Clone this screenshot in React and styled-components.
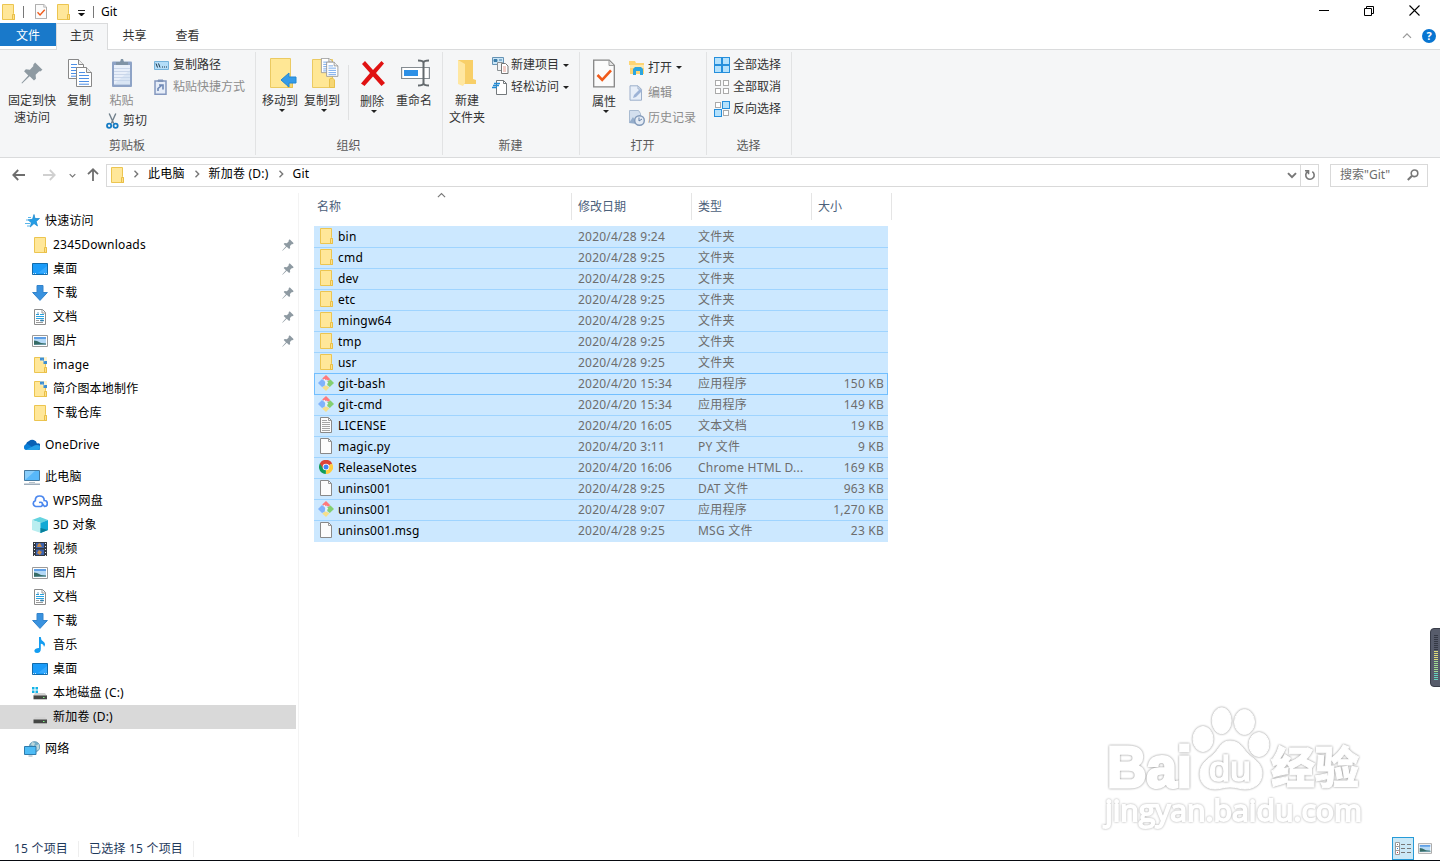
import React from "react";
import styled, { createGlobalStyle, css } from "styled-components";

const FONT = '"Noto Sans", "Noto Sans CJK SC", sans-serif';

const GlobalStyle = createGlobalStyle`
  * {
    box-sizing: border-box;
  }

  body {
    margin: 0;
    overflow: hidden;
    font-family: ${FONT};
    font-size: 12px;
    line-height: 16px;
    color: #000;
    background-color: #fff;
  }

  svg {
    display: block;
    flex-shrink: 0;
  }
`;

/* ---------- icons ---------- */

const FolderIcon = ({ marked }) => (
  <svg width="13" height="16" viewBox="0 0 13 16">
    <path d="M.5.5h11v9.200l1 1v4.800H.5z" fill="#ffe799" stroke="#ecc550" />
    <path d="M10.500 15.500v-5h2v5z" fill="#ffe08a" stroke="#e9bf46" />
    {marked && (
      <g>
        <path d="M6 0h7v8l-3-3-4-1z" fill="#fff3cf" />
        <path d="M6 .5h4v3H6zM9.500 4H13v3H9.500z" fill="#3e8fd2" />
        <path d="M8.500 2.500l2 2" stroke="#76b2e0" />
      </g>
    )}
  </svg>
);

const PinIcon = ({ size = 12 }) => (
  <svg width={size} height={size} viewBox="0 0 20 20">
    <path
      d="M12.8.5L19.5 7l-2 1.6-.9-.2-3.3 3.2.3 3.6-1.8 1.6-3.9-3.9L1 19.5.4 19l6.2-6.8-3.8-3.8 1.6-1.7 3.7.3 3.2-3.3-.3-1z"
      fill="#8e9aa2"
    />
  </svg>
);

const CheckDocIcon = ({ width = 12, height = 15 }) => (
  <svg width={width} height={height} viewBox="0 0 22 28">
    <path d="M.7.7h15.5l5.1 5.1v21.5H.7z" fill="#fbfbfb" stroke="#858585" strokeWidth="1.3" />
    <path d="M16 1v5h5" fill="#e5e5e5" stroke="#999" />
    <path d="M4.5 15.5l4.7 4.8 8.8-9.5" fill="none" stroke="#f05a1a" strokeWidth="2.6" />
  </svg>
);

const Page = ({ x, y, color = "#4d8fe5" }) => (
  <g transform={`translate(${x} ${y})`}>
    <path d="M.5.5h10l5 5v14H.5z" fill="#fff" stroke="#888" />
    <path d="M10.5.5v5h5" fill="#eee" stroke="#888" />
    <path d="M3 5.5h6M3 8.5h10M3 11.5h10M3 14.5h10M3 17.2h10" stroke={color} />
  </g>
);

const CopyIcon = () => (
  <svg width="26" height="30" viewBox="0 0 26 30">
    <Page x={1} y={1} />
    <Page x={9} y={9} />
  </svg>
);

const PasteIcon = () => (
  <svg width="22" height="30" viewBox="0 0 22 30">
    <rect x="1" y="3.5" width="20" height="25.5" rx="1" fill="#8ea3c6" />
    <path d="M3 7h16v19.5H3z" fill="#e9f0fa" />
    <path d="M3 10.5h16M3 13.5h16M3 16.5h16M3 19.5h16M3 22.5h16" stroke="#cbd7ea" />
    <path d="M5 7V4h4l1-3h2l1 3h4v3z" fill="#8094a6" />
    <path d="M3 26.5L19 12v14.5z" fill="#c6d6ed" opacity=".45" />
  </svg>
);

const CutIcon = () => (
  <svg width="13" height="16" viewBox="0 0 13 16">
    <path d="M3.200.500l4.500 10M9.800.500l-4.500 10" stroke="#71808c" strokeWidth="1.400" />
    <circle cx="3.100" cy="12.700" r="2.100" fill="none" stroke="#147bc4" strokeWidth="1.800" />
    <circle cx="9.600" cy="12.700" r="2.100" fill="none" stroke="#147bc4" strokeWidth="1.800" />
  </svg>
);

const PathIcon = () => (
  <svg width="15" height="9" viewBox="0 0 15 9">
    <path d="M.5.5h14v8H.5z" fill="#b4ddf8" stroke="#76b3db" />
    <path d="M2 2.500l1.500 4M4.500 2.500l1.500 4M8 6h1M10 6h1M12 6h1" stroke="#1c3548" fill="none" />
  </svg>
);

const ShortcutIcon = () => (
  <svg width="13" height="16" viewBox="0 0 13 16">
    <path d="M1 2h11v13.200H1z" fill="#e6edf8" stroke="#8498bf" strokeWidth="1.5" />
    <path d="M4 2.500V1h5v1.500H4z" fill="#8095b9" stroke="#8095b9" />
    <path d="M4 12V9.500l3.500-3M5 6h4v4.500" fill="none" stroke="#6d87b5" strokeWidth="1.600" />
  </svg>
);

const MoveToIcon = () => (
  <svg width="28" height="31" viewBox="0 0 28 31">
    <path d="M1.5.5h20v23l2 2v4H1.5z" fill="#ffe795" stroke="#ebca62" />
    <path d="M18.5 29.5V21l2-1 3 2v7.5z" fill="#f6d673" stroke="#e8c14c" />
    <path d="M12 22l8-7v4h7v6h-7v4z" fill="#359be8" stroke="#2287d4" />
  </svg>
);

const CopyToIcon = () => (
  <svg width="28" height="31" viewBox="0 0 28 31">
    <path d="M1.500 1.500h20v22l2 2v4h-22z" fill="#ffe795" stroke="#ebca62" />
    <path d="M18.500 29.500V21l3-1 2 2v7.500z" fill="#f6d673" stroke="#e8c14c" />
    <g transform="translate(10) scale(.75)">
      <Page x={0} y={0} />
      <Page x={7} y={5} />
    </g>
  </svg>
);

const DeleteIcon = () => (
  <svg width="26" height="27" viewBox="0 0 26 27">
    <path d="M2 4l3-3 8 9 8.5-9L24 3.5l-8 9.5 9 10-3.5 3-8.5-9.5L4.5 26 1 23.5 10 13z" fill="#e01212" />
  </svg>
);

const RenameIcon = () => (
  <svg width="29" height="28" viewBox="0 0 29 28">
    <path d="M.6 8.5h27.8v11H.6z" fill="#fff" stroke="#858c91" strokeWidth="1.2" />
    <path d="M3 11h14v6H3z" fill="#2d90e6" />
    <path d="M17 1.500q5 0 5.500 2Q23 1.500 28 1.500M22.500 3v22M17 26.500q5 0 5.500-2q.5 2 5.500 2" fill="none" stroke="#63696d" strokeWidth="2" />
  </svg>
);

const NewFolderIcon = () => (
  <svg width="20" height="28" viewBox="0 0 20 28">
    <path d="M1 1h15v19l3 1v4H1z" fill="#f8cf68" />
    <path d="M1 1l7 4v19l-2 3-5-2z" fill="#ffe7a1" />
  </svg>
);

const NewItemIcon = () => (
  <svg width="17" height="17" viewBox="0 0 17 17">
    <path d="M.5.500h11v7H.5z" fill="#cbe6f7" stroke="#6593b5" />
    <path d="M2 2.500h3v2H2zM7 3h3" fill="#3c7ea9" stroke="#3c7ea9" />
    <path d="M5.500 5.500h5v8h-5z" fill="#f2f4f5" stroke="#8b9195" />
    <path d="M9.500 6.500h4l2.500 2.500v7.500H9.500z" fill="#fff" stroke="#777" />
    <path d="M11 10h3M11 12h3M11 14h3" stroke="#e49a8e" />
  </svg>
);

const EasyAccessIcon = () => (
  <svg width="16" height="17" viewBox="0 0 16 17">
    <path d="M4.500 1.500h7l3 3v11h-10z" fill="#fff" stroke="#74797c" />
    <path d="M11.500 1.500v3h3" fill="none" stroke="#74797c" />
    <path d="M2 4.500h6M1 6.500h6M0 8.500h5" stroke="#238bd4" strokeWidth="1.300" />
  </svg>
);

const OpenIcon = () => (
  <svg width="16" height="14" viewBox="0 0 16 14">
    <path d="M0 0h6l1 2h8v11H1V4H0z" fill="#fdd574" />
    <path d="M1 4h14v3H1z" fill="#fee9ac" />
    <path d="M4 14V8l2-2h6l2 2v6h-3v-4H7v4z" fill="#2ba5df" />
  </svg>
);

const EditIcon = () => (
  <svg width="14" height="16" viewBox="0 0 14 16">
    <path d="M1 .800h8l3.500 3.500v10.900H1z" fill="#e7eef8" stroke="#9cafca" />
    <path d="M9 1v3h3" fill="none" stroke="#9cafca" />
    <path d="M4 13l1-3 6-6 2 2-6 6z" fill="#9db3d6" />
  </svg>
);

const HistoryIcon = () => (
  <svg width="16" height="16" viewBox="0 0 16 16">
    <path d="M.5.500h9l2 3v9H.5z" fill="#d3dfee" stroke="#a9bbd1" />
    <path d="M0 13l4-6 4 7z" fill="#94adcb" />
    <circle cx="10.500" cy="10.500" r="4.800" fill="#e4ebf4" stroke="#8199b9" strokeWidth="1.400" />
    <path d="M10 7.500v3.500l3-2" fill="none" stroke="#637fa6" />
  </svg>
);

const GridIcon = ({ active = [] }) => (
  <svg width="16" height="16" viewBox="0 0 16 16">
    {[0, 1, 2, 3].map((i) => {
      const on = active.includes(i);
      const size = on ? 7 : 5;
      const off = on ? 0.5 : 1.5;
      return (
        <rect
          key={i}
          x={(i % 2) * 8 + off}
          y={Math.floor(i / 2) * 8 + off}
          width={size}
          height={size}
          fill={on ? "#b4e1fc" : "#fff"}
          stroke={on ? "#258fdc" : "#aaa"}
        />
      );
    })}
  </svg>
);

const StarIcon = () => (
  <svg width="15" height="14" viewBox="0 0 15 14">
    <path d="M9 .5l1 4h4.500l-3.300 2.900L12.500 12 9 9.500 5.300 13l1-4.300L3 5.800l4.500-.5z" fill="#239de6" stroke="#1684cb" strokeWidth=".7" />
    <path d="M3 3.500h3M1 6h4M0 9.500h5M2 12h3" stroke="#58b5ea" />
  </svg>
);

const DesktopIcon = () => (
  <svg width="16" height="12" viewBox="0 0 16 12">
    <path d="M.5.500h15v11H.5z" fill="#1b9cf9" stroke="#116bab" />
    <path d="M6 10L15 3v7z" fill="#35a9fe" />
    <path d="M1 10.500h1M3 10.500h1M12 10.500h1M14 10.500h1" stroke="#cce8fb" />
  </svg>
);

const DownloadIcon = () => (
  <svg width="16" height="16" viewBox="0 0 16 16">
    <path d="M5 .500h6v7h4.400L8 15.400.600 7.500H5z" fill="#3992df" stroke="#3484cb" />
  </svg>
);

const DocumentIcon = () => (
  <svg width="12" height="16" viewBox="0 0 12 16">
    <path d="M.5.500h8l3 3v12H.5z" fill="#fff" stroke="#8c8c8c" />
    <path d="M8 .500v3.500h3.500" fill="none" stroke="#999" />
    <path d="M2 5.500h3M6 5.500h4M2 7.500h8M2 9.500h8" stroke="#28a2df" />
    <path d="M2 11.500h3M2 13.500h7" stroke="#999" />
    <path d="M4 3v3M6.500 11h3v1h-3z" stroke="#317fae" fill="#317fae" strokeWidth=".7" />
  </svg>
);

const PictureIcon = ({ width = 16, height = 12 }) => (
  <svg width={width} height={height} viewBox="0 0 16 12">
    <path d="M.5.500h15v11H.5z" fill="#fff" stroke="#9a9a9a" />
    <path d="M2 2h12v8H2z" fill="#b5d9f6" />
    <path d="M2 2h12v2H2z" fill="#5f9fe6" />
    <path d="M2 5.500l3 .5 4 2 5 .5V10H2z" fill="#376c66" />
    <path d="M2 9.500l12-.8V10H2z" fill="#6e9da8" />
  </svg>
);

const OneDriveIcon = () => (
  <svg width="16" height="12" viewBox="0 0 16 12">
    <path d="M2.500 11A3 3 0 0 1 2 5.300 4 4 0 0 1 5 2 4.800 4.800 0 0 1 13 4.500 3.200 3.200 0 0 1 14.500 11z" fill="#0860b5" />
    <path d="M0 8.500Q.4 5.500 3.500 5l9 6H3Q0 11 0 8.500" fill="#087fd8" />
    <path d="M2 10.800l9-4.500q5-1 5 2.200 0 2.500-2.500 2.500H3z" fill="#26a0e8" />
  </svg>
);

const ComputerIcon = () => (
  <svg width="16" height="15" viewBox="0 0 16 15">
    <path d="M.5.500h15v10H.5z" fill="#58b8fa" stroke="#45799f" />
    <path d="M1 10L11 1H1z" fill="#88cdfb" />
    <path d="M5 12.500h6" stroke="#b5c1ca" />
    <path d="M0 14.200h16" stroke="#8699aa" strokeWidth="1.200" />
  </svg>
);

const CloudIcon = () => (
  <svg width="16" height="13" viewBox="0 0 16 13">
    <path d="M9.500 11.500H3.800A3 3 0 0 1 3.300 5.700Q3.200 1 7.700 1T12.200 5.500a3 3 0 0 1 .3 6l-2-2.500M7 7.500q3.500-1 3.500 2 0 1.500-1.500 2" fill="none" stroke="#4b87ee" strokeWidth="1.700" />
  </svg>
);

const CubeIcon = () => (
  <svg width="16" height="16" viewBox="0 0 16 16">
    <path d="M0 3l8-3 8 3-7 3z" fill="#64d3df" />
    <path d="M0 3l9 3v10l-9-3z" fill="#b9eef0" />
    <path d="M8.500 6L16 3v10l-7.500 3z" fill="#12a9d5" />
    <path d="M8.500 11l7.500 2-7.500 3z" fill="#087f9b" />
  </svg>
);

const VideoIcon = () => (
  <svg width="14" height="14" viewBox="0 0 14 14">
    <path d="M0 0h14v14H0z" fill="#343941" />
    <path d="M1.500 1v13M12.500 1v13" stroke="#eee" strokeDasharray="1 2" />
    <path d="M3 1h8v5H3zM3 7.500h8V13H3z" fill="#3b63af" />
    <path d="M5 2l2-1 2 4H4zM4 11l2-3 3 2-2 3z" fill="#c88a48" />
  </svg>
);

const MusicIcon = () => (
  <svg width="12" height="16" viewBox="0 0 12 16">
    <path d="M5 0h1.800q0 3 2.200 4.200 3.500 2.300 1 5.800-.2-3-3.200-3.300V12q0 4-3.800 4-3 0-2.600-2.500Q1 11 5 11z" fill="#139df1" />
  </svg>
);

const DriveIcon = ({ system }) => (
  <svg width="16" height="16" viewBox="0 0 16 16">
    <path d="M3 8h10l2 3H1z" fill="#d3d3d3" />
    <path d="M1.500 10.500h13.500v3.800H1.500z" fill="#454745" />
    <path d="M11 12.500h1.500" stroke="#7ef482" />
    {system && <path d="M0 2h2.500v2.500H0zM3.500 2H6v2.500H3.500zM0 5.500h2.500V8H0zM3.500 5.500H6V8H3.500z" fill="#13b3e7" />}
  </svg>
);

const NetworkIcon = () => (
  <svg width="16" height="16" viewBox="0 0 16 16">
    <circle cx="10.500" cy="5.800" r="5.300" fill="#74aec8" stroke="#528ba8" strokeWidth=".6" />
    <path d="M8 1l3 1-1 3-3-1zM11 5l4-2v5l-3 2z" fill="#bed7db" />
    <path d="M.5 5.500h11.500v8H.5z" fill="#4ebcf5" stroke="#2e7bac" />
    <path d="M4.500 15h4" stroke="#98a8b2" />
  </svg>
);

const GitIcon = () => (
  <svg width="16" height="16" viewBox="0 0 16 16">
    <path d="M8 0l4.300 4.300-2 1.500-2-1.300-1.300 1.200-2.800-2.200z" fill="#ff797b" />
    <path d="M4 4l3.500 3-1 4L4 12 0 8z" fill="#80b2fb" />
    <path d="M12.500 4.500L16 8l-4.200 4-2.500-2V6.500z" fill="#83cf71" />
    <path d="M7.500 10.200l4 2L8 16l-3.800-3.500z" fill="#f6df8a" />
    <path d="M6 4.200l2 2.300v4M8 7l2 1" fill="none" stroke="#eaf5fb" strokeWidth="1.200" />
  </svg>
);

const FileIcon = ({ lines }) => (
  <svg width="12" height="16" viewBox="0 0 12 16">
    <path d="M.5.500h8l3 3v12H.5z" fill="#fcfcfc" stroke="#898989" />
    <path d="M8.500.500v3h3" fill="none" stroke="#999" />
    {lines && <path d="M2 3.500h5M2 5.500h8M2 7.500h8M2 9.500h8M2 11.500h8M2 13.500h8" stroke="#a5a5a5" />}
  </svg>
);

const ChromeIcon = () => (
  <svg width="14" height="14" viewBox="0 0 14 14">
    <path d="M7 7L.9 3.500A7 7 0 0 1 13.100 3.500z" fill="#dc4437" />
    <path d="M7 7l6.100-3.500A7 7 0 0 1 6.800 14z" fill="#ffcd40" />
    <path d="M7 7l-.2 7A7 7 0 0 1 .9 3.500z" fill="#119d58" />
    <path d="M7 3.500h6.100A7 7 0 0 0 .9 3.500L4 8.500z" fill="#dc4437" />
    <circle cx="7" cy="7" r="3.300" fill="#fff" />
    <circle cx="7" cy="7" r="2.500" fill="#4285f4" />
  </svg>
);

const ChevronIcon = ({ dir = "right", color = "#777", size = 8, stroke = 1.4 }) => {
  const turn = { right: 0, down: 90, up: -90 }[dir];
  return (
    <svg width={size} height={size} viewBox="0 0 8 8">
      <path d="M2.500.800L5.700 4 2.500 7.200" fill="none" stroke={color} strokeWidth={stroke} transform={`rotate(${turn} 4 4)`} />
    </svg>
  );
};

const ArrowIcon = ({ turn = 0, color = "#6e6e6e" }) => (
  <svg width="14" height="14" viewBox="0 0 14 14">
    <path d="M13 7H1.500M6.200 2L1.300 7l4.900 5" fill="none" stroke={color} strokeWidth="1.800" transform={`rotate(${turn} 7 7)`} />
  </svg>
);

const RefreshIcon = () => (
  <svg width="12" height="12" viewBox="0 0 12 12">
    <path d="M8.300 2.600a4.200 4.200 0 1 1-4.800.1M1 1.700h3.500v3.500" fill="none" stroke="#777" strokeWidth="1.600" />
  </svg>
);

const SearchIcon = () => (
  <svg width="12" height="12" viewBox="0 0 12 12">
    <circle cx="7.500" cy="4.300" r="3.300" fill="none" stroke="#777" strokeWidth="1.600" />
    <path d="M5 6.800L.800 11" stroke="#777" strokeWidth="2" />
  </svg>
);

const DetailsIcon = () => (
  <svg width="16" height="14" viewBox="0 0 16 14">
    <path d="M.5.500h4v12h-4zM.5 4.500h4M.5 8.500h4" fill="#fff" stroke="#999" />
    <path d="M2 2.500h1" stroke="#777" />
    <path d="M2 6.500h1" stroke="#2a7fd0" />
    <path d="M2 10.500h1" stroke="#c33" />
    <path d="M6 2.500h4M12 2.500h4M6 6.500h4M12 6.500h4M6 10.500h4M12 10.500h4" stroke="#777" />
  </svg>
);

/* ---------- layout ---------- */

const Window = styled.div`
  display: flex;
  flex-direction: column;
  width: 1440px;
  height: 861px;
  border-bottom: 1px solid #080a10;
  background-color: #fff;
`;

const TitleBar = styled.header`
  display: flex;
  justify-content: space-between;
  height: 23px;
`;

const QuickTools = styled.div`
  display: flex;
  align-items: center;
  height: 23px;
  padding-left: 2px;
`;

const ToolDivider = styled.i`
  width: 1px;
  height: 12px;
  margin: 0 ${({ $right }) => $right}px 0 ${({ $left }) => $left}px;
  background-color: #777;
`;

const CustomizeMark = styled.i`
  width: 7px;
  height: 6px;
  margin: 3px 0 0 8px;
  border-top: 1px solid #222;

  &::after {
    content: "";
    display: block;
    margin-top: 2px;
    border: 3.5px solid transparent;
    border-top: 3px solid #111;
    border-bottom: 0;
  }
`;

const CheckButton = styled.span`
  margin-right: 10px;
`;

const WindowButtons = styled.div`
  display: flex;
  align-items: center;
  gap: 35px;
  height: 21px;
  padding-right: 20px;
`;

const Tabs = styled.nav`
  display: flex;
  height: 27px;
  border-bottom: 1px solid #dadbdc;
`;

const Tab = styled.a`
  width: 53px;
  height: 27px;
  line-height: 23px;
  text-align: center;
  color: #333;
  border: 1px solid transparent;
  border-bottom: 0;

  ${({ $file }) =>
    $file &&
    css`
      width: 56px;
      height: 23px;
      line-height: 25px;
      color: #fff;
      border: 0;
      background-color: #1979ca;
    `}

  ${({ $active }) =>
    $active &&
    css`
      width: 52px;
      border-color: #dadbdc;
      background-color: #f5f6f7;
    `}
`;

const TabTools = styled.div`
  display: flex;
  align-items: center;
  gap: 10px;
  margin-left: auto;
  padding-right: 4px;
`;

const Help = styled.span`
  width: 14px;
  height: 14px;
  border-radius: 50%;
  background-color: #0875d1;
  color: #fff;
  font-size: 11px;
  font-weight: bold;
  line-height: 14px;
  text-align: center;
`;

const Ribbon = styled.section`
  display: flex;
  height: 108px;
  border-bottom: 1px solid #dadbdc;
  background-color: #f5f6f7;
`;

const Group = styled.div`
  display: flex;
  flex-direction: column;
  justify-content: space-between;
  width: ${({ $width }) => $width}px;
  height: 103px;
  margin-top: 2px;
  border-right: 1px solid #e2e3e4;
`;

const GroupBody = styled.div`
  display: flex;
  padding: 2px 0 0 ${({ $left = 0 }) => $left}px;
`;

const GroupName = styled.div`
  height: 17px;
  padding-right: 1px;
  color: #5a5a5a;
  text-align: center;
`;

const BigButton = styled.div`
  display: flex;
  flex-direction: column;
  align-items: center;
  width: ${({ $width }) => $width}px;
  line-height: 17px;
  text-align: center;
  color: ${({ $muted }) => ($muted ? "#8c8c8c" : "#333")};
`;

const BigIcon = styled.div`
  display: flex;
  align-items: center;
  justify-content: center;
  height: ${({ $low }) => ($low ? 39 : 38)}px;
  padding-left: ${({ $shift = 0 }) => $shift}px;
`;

const Caret = styled.i`
  border: 3px solid transparent;
  border-top-color: #222;
  border-bottom: 0;
  margin: 0 0 0 4px;
`;

const RibbonDivider = styled.i`
  width: 1px;
  height: 55px;
  margin: 11px 2px 0 5px;
  background-color: #e0e1e2;
`;

const Column = styled.div`
  display: flex;
  flex-direction: column;
  padding: ${({ $top = 0 }) => $top}px 0 0 ${({ $left = 0 }) => $left}px;
`;

const SmallButton = styled.div`
  display: flex;
  align-items: center;
  height: ${({ $height = 22 }) => $height}px;
  white-space: nowrap;
  color: ${({ $muted }) => ($muted ? "#8c8c8c" : "#333")};
`;

const SmallIcon = styled.span`
  display: flex;
  width: ${({ $width = 16 }) => $width}px;
  margin-right: 3px;
`;

const AddressRow = styled.section`
  display: flex;
  align-items: center;
  height: 32px;
  padding: 2px 12px 0;
`;

const NavButtons = styled.div`
  display: flex;
  align-items: center;
  width: 94px;

  & > :nth-child(2) {
    margin-left: 16px;
  }

  & > :nth-child(3) {
    margin-left: 13px;
  }

  & > :nth-child(4) {
    margin-left: 10px;
  }
`;

const AddressBox = styled.div`
  display: flex;
  align-items: center;
  width: 1213px;
  height: 23px;
  padding-left: 4px;
  border: 1px solid #d9d9d9;
`;

const Crumb = styled.span`
  display: flex;
  align-items: center;
  gap: 8px;
  margin-left: 8px;
  padding-bottom: 2px;
`;

const AddressTools = styled.div`
  display: flex;
  align-items: center;
  gap: 3px;
  height: 21px;
  margin-left: auto;
  padding-right: 2px;
`;

const RefreshCell = styled.span`
  display: flex;
  align-items: center;
  height: 21px;
  padding-left: 3px;
  border-left: 1px solid #d9d9d9;
`;

const SearchBox = styled.div`
  display: flex;
  align-items: center;
  justify-content: space-between;
  width: 98px;
  height: 23px;
  margin-left: 11px;
  padding: 0 8px 0 9px;
  border: 1px solid #d9d9d9;
  color: #6d6d6d;
`;

const Content = styled.main`
  display: flex;
  height: 647px;
`;

const Sidebar = styled.aside`
  width: 299px;
  height: 644px;
  margin-top: 3px;
  padding-top: 16px;
  border-right: 1px solid #f3f3f3;
`;

const SideItem = styled.div`
  display: flex;
  align-items: center;
  width: 296px;
  height: 24px;
  margin-top: ${({ $spaced }) => ($spaced ? 8 : 0)}px;
  padding: 0 2px 0 ${({ $root }) => ($root ? 24 : 32)}px;
  background-color: ${({ $selected }) => ($selected ? "#d9d9d9" : "transparent")};

  & > svg:last-child {
    margin-left: auto;
  }
`;

const SideIcon = styled.span`
  display: flex;
  justify-content: center;
  width: 16px;
  margin-right: 5px;
`;

const Label = styled.span`
  white-space: nowrap;
  letter-spacing: 0.2px;
`;

const Files = styled.section`
  width: 593px;
  padding: 3px 0 0 15px;
`;

const columns = css`
  display: grid;
  grid-template-columns: 258px 120px 120px 80px;
`;

const FileHeader = styled.div`
  ${columns}
  height: 27px;
  margin-bottom: 6px;
  color: #4c607a;
`;

const HeaderCell = styled.div`
  position: relative;
  padding-left: ${({ $first }) => ($first ? 3 : 6)}px;
  line-height: 27px;
  border-right: 1px solid #e5e5e5;
`;

const SortMark = styled.span`
  position: absolute;
  top: -2px;
  left: 123px;
`;

const FileRow = styled.div`
  ${columns}
  grid-template-columns: 258px 120px 120px 76px;
  align-items: center;
  width: 574px;
  height: 21px;
  background-color: #cce8ff;
  border-top: 1px solid #9fd4ff;
  color: #6d6d6d;
  box-shadow: ${({ $focused }) => ($focused ? "inset 1px 0 #72bfff, inset -1px 0 #72bfff" : "none")};
  border-top-color: ${({ $focused, $afterFocus }) => ($focused || $afterFocus ? "#72bfff" : "#9fd4ff")};

  &:first-child {
    border-top-color: #cce8ff;
  }

  &:last-child {
    height: 22px;
    padding-bottom: 1px;
  }
`;

const FileName = styled.div`
  display: flex;
  align-items: center;
  height: 16px;
  padding-left: 4px;
  color: #000;
`;

const FileGlyph = styled(SideIcon)`
  margin: -2px 4px 0 0;
`;

const Cell = styled.div`
  padding-left: 6px;
  white-space: nowrap;
  letter-spacing: 0.22px;
`;

const SizeCell = styled(Cell)`
  padding: 0 4px 0 0;
  text-align: right;
`;

const StatusBar = styled.footer`
  display: flex;
  align-items: center;
  height: 23px;
  padding: 0 8px 0 14px;
  color: #1e395b;
`;

const StatusText = styled.span`
  height: 16px;
  padding-right: 10px;
  margin-right: 10px;
  border-right: 1px solid #eee;
  letter-spacing: 0.2px;
`;

const ViewButtons = styled.div`
  display: flex;
  align-items: center;
  gap: 4px;
  margin-left: auto;
`;

const ViewActive = styled.span`
  display: flex;
  align-items: center;
  justify-content: center;
  width: 22px;
  height: 23px;
  border: 1px solid #269bd8;
  background-color: #cbe8f6;
`;

const Meter = styled.div`
  position: absolute;
  top: 628px;
  left: 1430px;
  display: flex;
  flex-direction: column;
  gap: 1px;
  width: 14px;
  height: 59px;
  padding: 6px 0 0 3px;
  border: 1px solid #393d49;
  border-radius: 4px;
  background-color: #575c6b;
`;

const MeterBar = styled.i`
  width: 4px;
  height: 1px;
  background-color: ${({ $color }) => $color};
`;

const Watermark = styled.svg`
  position: absolute;
  top: 700px;
  left: 1098px;
  fill: #fff;
  stroke: #fff;

  & > * {
    filter: drop-shadow(0 0 0.9px #8c8c8c);
  }

  & > :last-child {
    filter: drop-shadow(0 0 0.9px #a8a8a8);
  }
`;

const quickAccess = [
  { name: "2345Downloads", icon: <FolderIcon />, pinned: true },
  { name: "桌面", icon: <DesktopIcon />, pinned: true },
  { name: "下载", icon: <DownloadIcon />, pinned: true },
  { name: "文档", icon: <DocumentIcon />, pinned: true },
  { name: "图片", icon: <PictureIcon />, pinned: true },
  { name: "image", icon: <FolderIcon marked /> },
  { name: "简介图本地制作", icon: <FolderIcon marked /> },
  { name: "下载仓库", icon: <FolderIcon /> },
];

const computer = [
  { name: "WPS网盘", icon: <CloudIcon /> },
  { name: "3D 对象", icon: <CubeIcon /> },
  { name: "视频", icon: <VideoIcon /> },
  { name: "图片", icon: <PictureIcon /> },
  { name: "文档", icon: <DocumentIcon /> },
  { name: "下载", icon: <DownloadIcon /> },
  { name: "音乐", icon: <MusicIcon /> },
  { name: "桌面", icon: <DesktopIcon /> },
  { name: "本地磁盘 (C:)", icon: <DriveIcon system /> },
  { name: "新加卷 (D:)", icon: <DriveIcon />, selected: true },
];

const sideItems = [
  { name: "快速访问", icon: <StarIcon />, root: true },
  ...quickAccess,
  { name: "OneDrive", icon: <OneDriveIcon />, root: true, spaced: true },
  { name: "此电脑", icon: <ComputerIcon />, root: true, spaced: true },
  ...computer,
  { name: "网络", icon: <NetworkIcon />, root: true, spaced: true },
];

const fileIcons = {
  folder: <FolderIcon />,
  git: <GitIcon />,
  text: <FileIcon lines />,
  file: <FileIcon />,
  chrome: <ChromeIcon />,
};

const files = [
  ["bin", "2020/4/28 9:24", "文件夹", "", "folder"],
  ["cmd", "2020/4/28 9:25", "文件夹", "", "folder"],
  ["dev", "2020/4/28 9:25", "文件夹", "", "folder"],
  ["etc", "2020/4/28 9:25", "文件夹", "", "folder"],
  ["mingw64", "2020/4/28 9:25", "文件夹", "", "folder"],
  ["tmp", "2020/4/28 9:25", "文件夹", "", "folder"],
  ["usr", "2020/4/28 9:25", "文件夹", "", "folder"],
  ["git-bash", "2020/4/20 15:34", "应用程序", "150 KB", "git"],
  ["git-cmd", "2020/4/20 15:34", "应用程序", "149 KB", "git"],
  ["LICENSE", "2020/4/20 16:05", "文本文档", "19 KB", "text"],
  ["magic.py", "2020/4/20 3:11", "PY 文件", "9 KB", "file"],
  ["ReleaseNotes", "2020/4/20 16:06", "Chrome HTML D...", "169 KB", "chrome"],
  ["unins001", "2020/4/28 9:25", "DAT 文件", "963 KB", "file"],
  ["unins001", "2020/4/28 9:07", "应用程序", "1,270 KB", "git"],
  ["unins001.msg", "2020/4/28 9:25", "MSG 文件", "23 KB", "file"],
];

const FOCUSED_ROW = 7;

const meterColor = (i) => {
  if (i < 8) return "#343844";
  if (i < 13) return "#dddc79";
  return i < 19 ? "#a0dc91" : "#65d5bd";
};

const Big = ({ icon, width, muted, caret, shift, low, children }) => (
  <BigButton $width={width} $muted={muted}>
    <BigIcon $shift={shift} $low={low}>{icon}</BigIcon>
    <span>{children}</span>
    {caret && <Caret />}
  </BigButton>
);

const Small = ({ icon, iconWidth, height, muted, caret, children }) => (
  <SmallButton $height={height} $muted={muted}>
    <SmallIcon $width={iconWidth}>{icon}</SmallIcon>
    {children}
    {caret && <Caret />}
  </SmallButton>
);

const RibbonBar = () => (
  <Ribbon>
    <Group $width={256}>
      <GroupBody>
        <Big icon={<PinIcon size={22} />} width={64}>
          固定到快
          <br />
          速访问
        </Big>
        <Big icon={<CopyIcon />} width={30} shift={1}>复制</Big>
        <Column $left={12}>
          <Big icon={<PasteIcon />} width={31} muted>粘贴</Big>
          <Small icon={<CutIcon />} iconWidth={14} height={24}>剪切</Small>
        </Column>
        <Column $left={7}>
          <Small icon={<PathIcon />}>复制路径</Small>
          <Small icon={<ShortcutIcon />} muted>粘贴快捷方式</Small>
        </Column>
      </GroupBody>
      <GroupName>剪贴板</GroupName>
    </Group>
    <Group $width={187}>
      <GroupBody $left={3}>
        <Big icon={<MoveToIcon />} width={42} shift={5} caret>移动到</Big>
        <Big icon={<CopyToIcon />} width={42} shift={5} caret>复制到</Big>
        <RibbonDivider />
        <Big icon={<DeleteIcon />} width={42} shift={1} low caret>删除</Big>
        <Big icon={<RenameIcon />} width={42} shift={2}>重命名</Big>
      </GroupBody>
      <GroupName>组织</GroupName>
    </Group>
    <Group $width={137}>
      <GroupBody $left={2}>
        <Big icon={<NewFolderIcon />} width={44}>
          新建
          <br />
          文件夹
        </Big>
        <Column $left={3}>
          <Small icon={<NewItemIcon />} caret>新建项目</Small>
          <Small icon={<EasyAccessIcon />} caret>轻松访问</Small>
        </Column>
      </GroupBody>
      <GroupName>新建</GroupName>
    </Group>
    <Group $width={127}>
      <GroupBody $left={3}>
        <Big icon={<CheckDocIcon width={22} height={29} />} width={42} low caret>属性</Big>
        <Column $left={4} $top={1}>
          <Small icon={<OpenIcon />} height={25} caret>打开</Small>
          <Small icon={<EditIcon />} height={25} muted>编辑</Small>
          <Small icon={<HistoryIcon />} height={25} muted>历史记录</Small>
        </Column>
      </GroupBody>
      <GroupName>打开</GroupName>
    </Group>
    <Group $width={85}>
      <GroupBody $left={7}>
        <Column>
          <Small icon={<GridIcon active={[0, 1, 2, 3]} />}>全部选择</Small>
          <Small icon={<GridIcon />}>全部取消</Small>
          <Small icon={<GridIcon active={[1, 2]} />}>反向选择</Small>
        </Column>
      </GroupBody>
      <GroupName>选择</GroupName>
    </Group>
  </Ribbon>
);

const FileList = () => (
  <Files>
    <FileHeader>
      <HeaderCell $first>
        名称
        <SortMark>
          <ChevronIcon dir="up" size={9} stroke={1} />
        </SortMark>
      </HeaderCell>
      <HeaderCell>修改日期</HeaderCell>
      <HeaderCell>类型</HeaderCell>
      <HeaderCell>大小</HeaderCell>
    </FileHeader>
    <div>
      {files.map(([name, date, type, size, icon], i) => (
        <FileRow key={i} $focused={i === FOCUSED_ROW} $afterFocus={i === FOCUSED_ROW + 1}>
          <FileName>
            <FileGlyph>{fileIcons[icon]}</FileGlyph>
            <Label>{name}</Label>
          </FileName>
          <Cell>{date}</Cell>
          <Cell>{type}</Cell>
          <SizeCell>{size}</SizeCell>
        </FileRow>
      ))}
    </div>
  </Files>
);

const BaiduMark = () => (
  <Watermark width="275" height="150" viewBox="0 0 275 150">
    <text x="9" y="87" fontFamily="Liberation Sans, sans-serif" fontSize="58" fontWeight="bold" textLength="85" lengthAdjust="spacingAndGlyphs" strokeWidth="3">Bai</text>
    <ellipse cx="105" cy="39" rx="10" ry="12.500" />
    <ellipse cx="123.700" cy="20.700" rx="9.500" ry="13" />
    <ellipse cx="146.500" cy="22" rx="10" ry="12.500" />
    <ellipse cx="161" cy="44.500" rx="10" ry="12" />
    <path d="M132 41c9 0 12 6 17 12 6 6 15 10 15 20 0 11-8 16-17 16-5 0-9-2-15-2s-10 2-15 2c-9 0-15-6-15-15 0-11 9-15 15-21 5-6 7-12 15-12z" />
    <text x="111" y="81" fontFamily="Liberation Sans, sans-serif" fontSize="35" textLength="42" lengthAdjust="spacingAndGlyphs" strokeWidth="1.500">du</text>
    <text x="173" y="84" fontFamily="Noto Sans CJK SC, sans-serif" fontSize="44" fontWeight="900" textLength="88" strokeWidth="1">经验</text>
    <text x="7" y="121" fontFamily="Open Sans, sans-serif" fontSize="29" fontWeight="400" textLength="257" lengthAdjust="spacingAndGlyphs" strokeWidth="1.800">jingyan.baidu.com</text>
  </Watermark>
);

const App = () => (
  <>
    <GlobalStyle />
    <Window>
      <TitleBar>
        <QuickTools>
          <FolderIcon />
          <ToolDivider $left={8} $right={11} />
          <CheckButton>
            <CheckDocIcon />
          </CheckButton>
          <FolderIcon />
          <CustomizeMark />
          <ToolDivider $left={8} $right={7} />
          Git
        </QuickTools>
        <WindowButtons>
          <svg width="10" height="10" viewBox="0 0 10 10">
            <path d="M0 4.500h10" stroke="#000" />
          </svg>
          <svg width="10" height="10" viewBox="0 0 10 10">
            <path d="M.5 2.500h7v7h-7zM2.500 2V.500h7v7H8" fill="none" stroke="#000" />
          </svg>
          <svg width="11" height="11" viewBox="0 0 11 11">
            <path d="M.500.500l10 10M10.500.500l-10 10" stroke="#000" strokeWidth="1.100" />
          </svg>
        </WindowButtons>
      </TitleBar>
      <Tabs>
        <Tab $file>文件</Tab>
        <Tab $active>主页</Tab>
        <Tab>共享</Tab>
        <Tab>查看</Tab>
        <TabTools>
          <ChevronIcon dir="up" color="#999" size={10} stroke={1} />
          <Help>?</Help>
        </TabTools>
      </Tabs>
      <RibbonBar />
      <AddressRow>
        <NavButtons>
          <ArrowIcon />
          <ArrowIcon turn={180} color="#d0d0d0" />
          <ChevronIcon dir="down" size={7} />
          <ArrowIcon turn={90} />
        </NavButtons>
        <AddressBox>
          <FolderIcon />
          {["此电脑", "新加卷 (D:)", "Git"].map((name) => (
            <Crumb key={name}>
              <ChevronIcon />
              <Label>{name}</Label>
            </Crumb>
          ))}
          <AddressTools>
            <ChevronIcon dir="down" size={10} stroke={1.6} />
            <RefreshCell>
              <RefreshIcon />
            </RefreshCell>
          </AddressTools>
        </AddressBox>
        <SearchBox>
          搜索"Git"
          <SearchIcon />
        </SearchBox>
      </AddressRow>
      <Content>
        <Sidebar>
          {sideItems.map(({ name, icon, root, spaced, selected, pinned }, i) => (
            <SideItem key={i} $root={root} $spaced={spaced} $selected={selected}>
              <SideIcon>{icon}</SideIcon>
              <Label>{name}</Label>
              {pinned && <PinIcon />}
            </SideItem>
          ))}
        </Sidebar>
        <FileList />
      </Content>
      <StatusBar>
        <StatusText>15 个项目</StatusText>
        <StatusText>已选择 15 个项目</StatusText>
        <ViewButtons>
          <ViewActive>
            <DetailsIcon />
          </ViewActive>
          <PictureIcon width={14} height={11} />
        </ViewButtons>
      </StatusBar>
    </Window>
    <BaiduMark />
    <Meter>
      {Array.from({ length: 23 }, (_, i) => (
        <MeterBar key={i} $color={meterColor(i)} />
      ))}
    </Meter>
  </>
);

export default App;
